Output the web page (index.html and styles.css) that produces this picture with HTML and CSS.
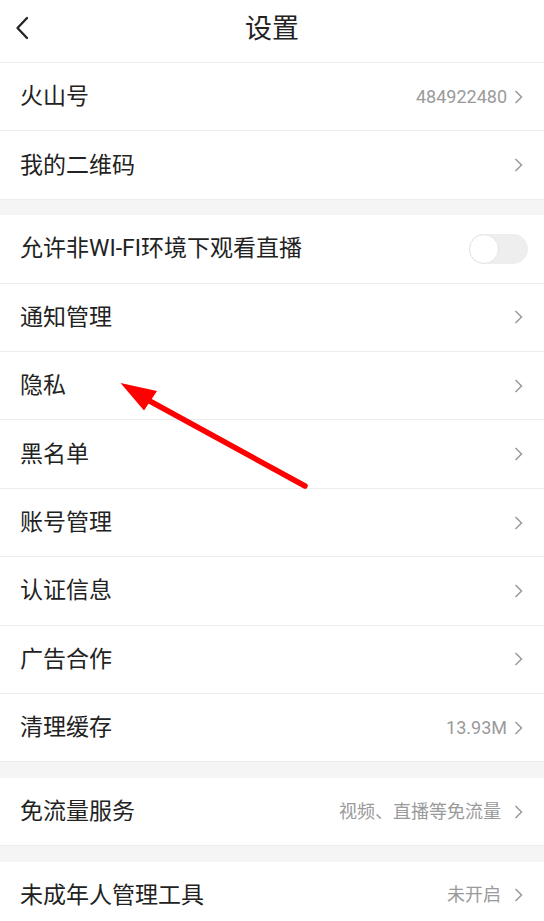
FILE: index.html
```html
<!DOCTYPE html>
<html lang="zh-CN">
<head>
<meta charset="utf-8">
<title>设置</title>
<link rel="stylesheet" href="styles.css">
</head>
<body>
<div class="page">
  <header class="topbar">
    <svg class="back" width="14" height="24" viewBox="0 0 14 24"><path d="M12 2 L2.5 12 L12 22" fill="none" stroke="#222" stroke-width="2.3" stroke-linecap="round" stroke-linejoin="round"/></svg>
    <h1 class="title">设置</h1>
  </header>

  <section class="group">
    <div class="row"><span class="label">火山号</span><span class="value">484922480</span><svg class="chev" width="9" height="14" viewBox="0 0 9 14"><path d="M1.5 1 L7.5 7 L1.5 13" fill="none" stroke="#9a9a9a" stroke-width="1.5"/></svg></div>
    <div class="row"><span class="label">我的二维码</span><svg class="chev" width="9" height="14" viewBox="0 0 9 14"><path d="M1.5 1 L7.5 7 L1.5 13" fill="none" stroke="#9a9a9a" stroke-width="1.5"/></svg></div>
  </section>
  <div class="gap"></div>

  <section class="group">
    <div class="row"><span class="label">允许非WI-FI环境下观看直播</span><span class="switch"><span class="knob"></span></span></div>
    <div class="row"><span class="label">通知管理</span><svg class="chev" width="9" height="14" viewBox="0 0 9 14"><path d="M1.5 1 L7.5 7 L1.5 13" fill="none" stroke="#9a9a9a" stroke-width="1.5"/></svg></div>
    <div class="row"><span class="label">隐私</span><svg class="chev" width="9" height="14" viewBox="0 0 9 14"><path d="M1.5 1 L7.5 7 L1.5 13" fill="none" stroke="#9a9a9a" stroke-width="1.5"/></svg></div>
    <div class="row"><span class="label">黑名单</span><svg class="chev" width="9" height="14" viewBox="0 0 9 14"><path d="M1.5 1 L7.5 7 L1.5 13" fill="none" stroke="#9a9a9a" stroke-width="1.5"/></svg></div>
    <div class="row"><span class="label">账号管理</span><svg class="chev" width="9" height="14" viewBox="0 0 9 14"><path d="M1.5 1 L7.5 7 L1.5 13" fill="none" stroke="#9a9a9a" stroke-width="1.5"/></svg></div>
    <div class="row"><span class="label">认证信息</span><svg class="chev" width="9" height="14" viewBox="0 0 9 14"><path d="M1.5 1 L7.5 7 L1.5 13" fill="none" stroke="#9a9a9a" stroke-width="1.5"/></svg></div>
    <div class="row"><span class="label">广告合作</span><svg class="chev" width="9" height="14" viewBox="0 0 9 14"><path d="M1.5 1 L7.5 7 L1.5 13" fill="none" stroke="#9a9a9a" stroke-width="1.5"/></svg></div>
    <div class="row"><span class="label">清理缓存</span><span class="value">13.93M</span><svg class="chev" width="9" height="14" viewBox="0 0 9 14"><path d="M1.5 1 L7.5 7 L1.5 13" fill="none" stroke="#9a9a9a" stroke-width="1.5"/></svg></div>
  </section>
  <div class="gap"></div>

  <section class="group">
    <div class="row"><span class="label">免流量服务</span><span class="value value-cjk">视频、直播等免流量</span><svg class="chev" width="9" height="14" viewBox="0 0 9 14"><path d="M1.5 1 L7.5 7 L1.5 13" fill="none" stroke="#9a9a9a" stroke-width="1.5"/></svg></div>
  </section>
  <div class="gap"></div>

  <section class="group">
    <div class="row"><span class="label">未成年人管理工具</span><span class="value value-cjk">未开启</span><svg class="chev" width="9" height="14" viewBox="0 0 9 14"><path d="M1.5 1 L7.5 7 L1.5 13" fill="none" stroke="#9a9a9a" stroke-width="1.5"/></svg></div>
  </section>

  <svg class="arrow" width="544" height="921" viewBox="0 0 544 921">
    <line x1="305" y1="486" x2="146" y2="399" stroke="#ff0000" stroke-width="5.5" stroke-linecap="round"/>
    <polygon points="120.5,383 157,391 144,410.5" fill="#ff0000"/>
  </svg>
</div>
</body>
</html>
```

FILE: styles.css
```css
html, body {
  margin: 0;
  padding: 0;
  background: #ffffff;
}

body {
  font-family: Roboto, "Noto Sans CJK SC", "Noto Sans", sans-serif;
  color: #222222;
}

.page {
  position: relative;
  width: 544px;
  height: 921px;
  overflow: hidden;
  background: #ffffff;
}

.topbar {
  position: relative;
  height: 62px;
  border-bottom: 1px solid #ececec;
  display: flex;
  align-items: center;
  justify-content: center;
}

.back {
  position: absolute;
  left: 15px;
  top: 16px;
}

.title {
  margin: 0 0 4px 0;
  font-size: 27px;
  font-weight: 400;
  color: #222222;
  line-height: 1;
  letter-spacing: 0;
}

.group {
  background: #ffffff;
}

.row {
  height: 67.4px;
  border-bottom: 1px solid #ececec;
  display: flex;
  align-items: center;
  padding: 0 21px 0 20px;
}

.label {
  flex: 1;
  font-size: 23px;
  color: #222222;
  line-height: 1;
}

.value {
  font-size: 18px;
  color: #9a9a9a;
  margin-right: 7px;
  line-height: 1;
}

.value-cjk {
  margin-right: 13px;
}

.chev {
  display: block;
  flex: none;
}

.gap {
  height: 15.5px;
  background: #f5f5f5;
}

.switch {
  position: relative;
  width: 59px;
  height: 30px;
  border-radius: 15px;
  background: #eeeeee;
  margin-right: -5px;
}

.knob {
  position: absolute;
  left: 0;
  top: 0;
  width: 28px;
  height: 28px;
  border-radius: 50%;
  background: #ffffff;
  border: 1px solid #e3e3e3;
}

.arrow {
  position: absolute;
  left: 0;
  top: 0;
  pointer-events: none;
}
```
